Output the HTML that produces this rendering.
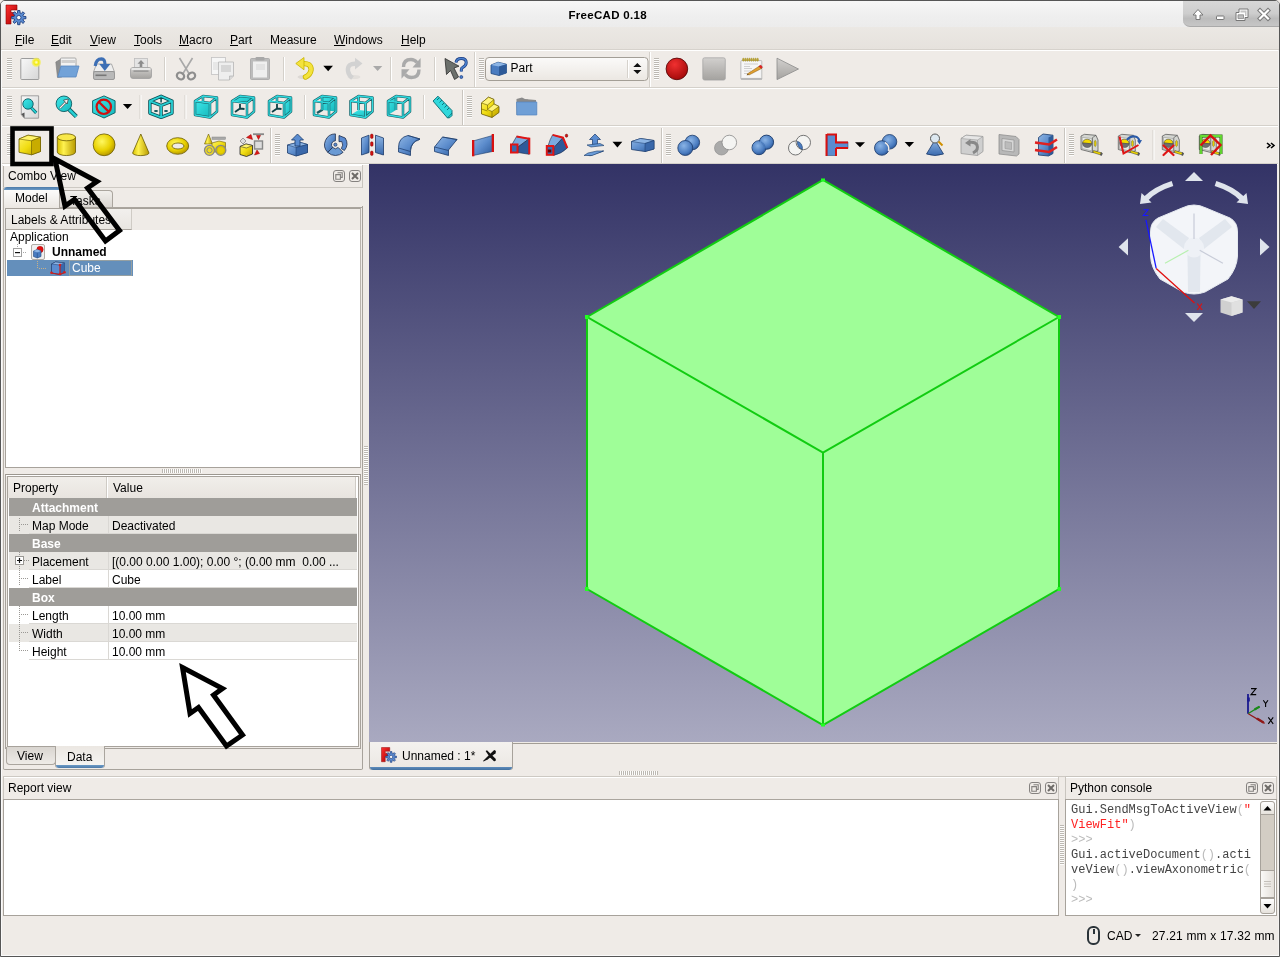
<!DOCTYPE html>
<html><head><meta charset="utf-8">
<style>
*{margin:0;padding:0;box-sizing:border-box}
html,body{width:1280px;height:957px;overflow:hidden}
.t,.row,.a{-webkit-font-smoothing:antialiased}
body{will-change:transform}
body{position:relative;background:#efebe7;font-family:"Liberation Sans",sans-serif;font-size:12px;color:#000}
.a{position:absolute}
.t{position:absolute;white-space:nowrap;line-height:12px}
.u{text-decoration:underline;text-underline-offset:1px;text-decoration-thickness:1px}
.gv{position:absolute;width:5px;background:repeating-linear-gradient(to bottom,#bcb8b2 0,#bcb8b2 1px,#fdfdfc 1px,#fdfdfc 2px)}
.gh{position:absolute;height:5px;background:repeating-linear-gradient(to right,#bcb8b2 0,#bcb8b2 1px,#fdfdfc 1px,#fdfdfc 2px)}
.vs{position:absolute;width:2px;height:28px;border-left:1px solid #d4d0ca;border-right:1px solid #fff}
.hl{position:absolute;height:2px;border-top:1px solid #d4d0ca;border-bottom:1px solid #fff}
.btn{position:absolute;width:12px;height:12px;border:1px solid #8a8783;border-radius:3px}
.row{position:absolute;left:9px;width:348px;height:18px}
.row .k{position:absolute;left:23px;top:4px;line-height:12px}
.row .v{position:absolute;left:103px;top:4px;line-height:12px}
.grp{background:#9f9d99;color:#fff;font-weight:bold}
.alt{background:#e9e7e3}
.wht{background:#fff}
.ln{border-bottom:1px solid #dad8d4}
.cs{position:absolute;left:0;top:0}
</style></head><body>
<svg width="0" height="0" style="position:absolute">
<defs>
 <linearGradient id="gFr" x1="0" y1="0" x2="1" y2="1"><stop offset="0" stop-color="#ff3030"/><stop offset="1" stop-color="#a80000"/></linearGradient>
 <symbol id="sFloat" viewBox="0 0 12 12"><rect x="0.5" y="0.5" width="11" height="11" rx="2.5" fill="none" stroke="#858280" stroke-width="1"/><path d="M4.5 2.8 H9.2 V7.4 H7.5 M2.8 4.6 H7.4 V9.2 H2.8 Z" fill="none" stroke="#858280" stroke-width="1.1"/></symbol>
 <symbol id="sClose" viewBox="0 0 12 12"><rect x="0.5" y="0.5" width="11" height="11" rx="2.5" fill="none" stroke="#858280" stroke-width="1"/><path d="M3 3 L9 9 M9 3 L3 9" stroke="#6e6b68" stroke-width="2"/></symbol>
 <symbol id="sFC" viewBox="0 0 24 24">
  <path d="M2 2 H13 V7 H7 V9.5 H11 V14 H7 V21 H2 Z" fill="url(#gFr)" stroke="#8a0000" stroke-width="0.6"/>
  <path d="M7 7 H13 V7.5" fill="none"/>
  <path d="M13.56 9.96 L13.67 7.49 L15.93 7.49 L16.04 9.96 L17.20 10.44 L19.03 8.78 L20.62 10.37 L18.96 12.20 L19.44 13.36 L21.91 13.47 L21.91 15.73 L19.44 15.84 L18.96 17.00 L20.62 18.83 L19.03 20.42 L17.20 18.76 L16.04 19.24 L15.93 21.71 L13.67 21.71 L13.56 19.24 L12.40 18.76 L10.57 20.42 L8.98 18.83 L10.64 17.00 L10.16 15.84 L7.69 15.73 L7.69 13.47 L10.16 13.36 L10.64 12.20 L8.98 10.37 L10.57 8.78 L12.40 10.44 Z" fill="#5a8ad0" stroke="#1a3a7a" stroke-width="0.9" stroke-linejoin="round"/><circle cx="14.8" cy="14.6" r="2.2" fill="#f4f4f4" stroke="#1a3a7a" stroke-width="0.8"/>
 </symbol>
</defs></svg>
<!-- window border -->
<div class="a" style="left:0;top:0;width:1280px;height:957px;border:1px solid #565656;border-radius:5px 5px 0 0"></div>
<div class="a" style="left:1px;top:27px;width:1px;height:929px;background:#fafafa"></div>
<div class="a" style="left:1278px;top:27px;width:1px;height:929px;background:#f4f2f0"></div>
<div class="a" style="left:1px;top:955px;width:1278px;height:1px;background:#fafafa"></div>
<!-- title bar -->
<div class="a" style="left:1px;top:1px;width:1278px;height:26px;background:linear-gradient(#f7f7f7,#efefef 55%,#ececec);border-radius:4px 4px 0 0"></div>
<div class="t" style="left:568.5px;top:9px;font-weight:bold;font-size:11.5px;letter-spacing:0.3px">FreeCAD 0.18</div>
<svg class="a" style="left:4px;top:3px" width="24" height="24"><use href="#sFC"/></svg>
<!-- window controls -->
<div class="a" style="left:1183px;top:1px;width:96px;height:26px;background:linear-gradient(#d7d7d7,#cdcdcd 50%,#bcbcbc 70%,#c6c6c6);border-radius:0 4px 0 7px;border-bottom:1px solid #a9a9a9"></div>
<svg class="a" style="left:1183px;top:0px" width="96" height="27">
 <g fill="#fff" stroke="#777" stroke-width="1" stroke-linejoin="round">
  <path d="M15 9.5 L20 15 L17 15 L17 19.5 L13 19.5 L13 15 L10 15 Z"/>
  <rect x="33.5" y="16" width="7.5" height="3.5" rx="0.5"/>
  <path d="M56 9 H65 V17.5 H62 V20.5 H53 V12.5 H56 Z"/>
  <path d="M57.5 10.5 H63.5 V16 H62 V12.5 H57.5 Z" fill="#c4c4c4" stroke="none"/>
  <rect x="55" y="14.8" width="5.5" height="3.8" fill="#bcbcbc" stroke="#888" stroke-width="0.8"/>
 </g>
 <path d="M77 10.5 L85 18.5 M85 10.5 L77 18.5" stroke="#7a7a7a" stroke-width="4.2" stroke-linecap="square"/>
 <path d="M77 10.5 L85 18.5 M85 10.5 L77 18.5" stroke="#fff" stroke-width="2.2" stroke-linecap="square"/>
</svg>
<!-- menu bar -->
<div class="a" style="left:1px;top:27px;width:1278px;height:23px;background:linear-gradient(#ebe8e4,#e6e2dd);border-bottom:1px solid #d6d2cc"></div>
<div class="a" style="left:2px;top:50px;width:1276px;height:1px;background:#fff"></div>
<div class="t" style="left:15px;top:34px"><span class="u">F</span>ile</div>
<div class="t" style="left:51px;top:34px"><span class="u">E</span>dit</div>
<div class="t" style="left:90px;top:34px"><span class="u">V</span>iew</div>
<div class="t" style="left:134px;top:34px"><span class="u">T</span>ools</div>
<div class="t" style="left:179px;top:34px"><span class="u">M</span>acro</div>
<div class="t" style="left:230px;top:34px"><span class="u">P</span>art</div>
<div class="t" style="left:270px;top:34px">Measure</div>
<div class="t" style="left:334px;top:34px"><span class="u">W</span>indows</div>
<div class="t" style="left:401px;top:34px"><span class="u">H</span>elp</div>

<!-- toolbar rows separators -->
<div class="hl" style="left:2px;top:87px;width:1276px"></div>
<div class="hl" style="left:2px;top:125px;width:1276px"></div>
<div class="hl" style="left:2px;top:163px;width:1276px"></div>
<!-- grips -->
<div class="gv" style="left:7px;top:58px;height:22px"></div>
<div class="gv" style="left:479px;top:58px;height:22px"></div>
<div class="gv" style="left:654px;top:58px;height:22px"></div>
<div class="gv" style="left:7px;top:96px;height:22px"></div>
<div class="gv" style="left:467px;top:96px;height:22px"></div>
<div class="gv" style="left:7px;top:134px;height:22px"></div>
<div class="gv" style="left:275px;top:134px;height:22px"></div>
<div class="gv" style="left:666px;top:134px;height:22px"></div>
<div class="gv" style="left:1069px;top:134px;height:22px"></div>

<svg class="a" style="left:0;top:0" width="1280" height="166">
<defs>
 <linearGradient id="gY" x1="0" y1="0" x2="1" y2="1"><stop offset="0" stop-color="#fff36a"/><stop offset="0.5" stop-color="#f0dc10"/><stop offset="1" stop-color="#b89a00"/></linearGradient>
 <linearGradient id="gYh" x1="0" y1="0" x2="1" y2="0"><stop offset="0" stop-color="#d8c000"/><stop offset="0.35" stop-color="#fff250"/><stop offset="1" stop-color="#b89a00"/></linearGradient>
 <radialGradient id="gYr" cx="0.4" cy="0.35" r="0.7"><stop offset="0" stop-color="#fff860"/><stop offset="0.6" stop-color="#e8d000"/><stop offset="1" stop-color="#b09000"/></radialGradient>
 <linearGradient id="gB" x1="0" y1="0" x2="1" y2="1"><stop offset="0" stop-color="#8fb6e4"/><stop offset="0.5" stop-color="#5c8ccc"/><stop offset="1" stop-color="#2c5a9a"/></linearGradient>
 <linearGradient id="gBv" x1="0" y1="0" x2="0" y2="1"><stop offset="0" stop-color="#8fb6e4"/><stop offset="1" stop-color="#3a6aae"/></linearGradient>
 <radialGradient id="gBr" cx="0.4" cy="0.35" r="0.7"><stop offset="0" stop-color="#8ab4e6"/><stop offset="0.7" stop-color="#4a7cc0"/><stop offset="1" stop-color="#2a5494"/></radialGradient>
 <linearGradient id="gT" x1="0" y1="0" x2="1" y2="1"><stop offset="0" stop-color="#3ee8ea"/><stop offset="1" stop-color="#16b8bc"/></linearGradient>
 <linearGradient id="gG" x1="0" y1="0" x2="0" y2="1"><stop offset="0" stop-color="#d2d0ce"/><stop offset="1" stop-color="#a4a29f"/></linearGradient>
 <linearGradient id="gW" x1="0" y1="0" x2="1" y2="1"><stop offset="0" stop-color="#f8f8f8"/><stop offset="1" stop-color="#d6d6d6"/></linearGradient>
 <radialGradient id="gR" cx="0.4" cy="0.3" r="0.75"><stop offset="0" stop-color="#f03030"/><stop offset="1" stop-color="#a00808"/></radialGradient>
 <radialGradient id="gSun" cx="0.5" cy="0.5" r="0.5"><stop offset="0" stop-color="#ffffd0"/><stop offset="0.45" stop-color="#f4ec10"/><stop offset="0.8" stop-color="#f4ee60" stop-opacity="0.7"/><stop offset="1" stop-color="#f4ee60" stop-opacity="0"/></radialGradient>
 <linearGradient id="gCombo" x1="0" y1="0" x2="0" y2="1"><stop offset="0" stop-color="#fbfaf9"/><stop offset="1" stop-color="#ebe7e2"/></linearGradient>
</defs>

<!-- ===== ROW 1 ===== -->
<!-- new -->
<rect x="20.8" y="58.5" width="18" height="21" rx="0.8" fill="url(#gW)" stroke="#9c9c9c" stroke-width="1"/>
<circle cx="36.3" cy="62.3" r="5.2" fill="url(#gSun)"/>
<!-- open -->
<path d="M55.8 62 L61 59 L62 77 L57.5 77.5 Z" fill="#8e8e8e" stroke="#777" stroke-width="0.6"/>
<rect x="60.5" y="58" width="15.5" height="11" rx="1" fill="#f2f2f2" stroke="#9a9a9a" stroke-width="0.8"/>
<rect x="61.5" y="60" width="13.5" height="3" fill="#cfcfcf"/>
<path d="M61 66 L79 66 L76 77 L57.8 77 Z" fill="#72a2d8" stroke="#5585c0" stroke-width="0.8"/>
<!-- save -->
<path d="M96.5 64 L111.5 64 L114.5 72 L93.5 72 Z" fill="#eeeeee" stroke="#9a9a9a" stroke-width="0.8"/>
<rect x="93.5" y="71.5" width="21" height="8" rx="1.5" fill="#b9b9b9" stroke="#8a8a8a" stroke-width="0.8"/>
<rect x="95.5" y="74.5" width="11" height="1.6" fill="#777"/>
<path d="M95.2 66 Q96 58.8 101.5 58.8 Q105 59 105 64.5" fill="none" stroke="#3d6fb5" stroke-width="3.2"/>
<path d="M99.3 64 L110.3 64 L104.8 71 Z" fill="#3d6fb5"/>
<!-- print (disabled) -->
<rect x="134.5" y="58.5" width="13" height="11" fill="#e4e4e4" stroke="#bdbdbd" stroke-width="0.8"/>
<path d="M141 60 L137.5 63.8 L139.7 63.8 L139.7 67 L142.3 67 L142.3 63.8 L144.5 63.8 Z" fill="#8c8c8c"/>
<rect x="130.5" y="67.5" width="21" height="11" rx="2.5" fill="url(#gG)" stroke="#9e9e9e" stroke-width="0.8"/>
<rect x="133.5" y="70.5" width="15" height="1.2" fill="#8a8a8a"/>
<rect x="131.5" y="68" width="19" height="2" fill="#f4f4f4" opacity="0.7"/>
<!-- sep -->
<rect x="164" y="57" width="1" height="24" fill="#d4d0ca"/><rect x="165" y="57" width="1" height="24" fill="#fff"/>
<!-- cut (disabled) -->
<g fill="none" stroke="#a8a8a8" stroke-width="1.6">
<path d="M179.5 58 L189 73.5 M192.5 58 L183 73.5"/>
</g>
<g fill="none" stroke="#8e8e8e" stroke-width="2.2">
<ellipse cx="180.5" cy="76" rx="3.8" ry="3.2" transform="rotate(30 180.5 76)"/>
<ellipse cx="191.5" cy="76" rx="3.8" ry="3.2" transform="rotate(-30 191.5 76)"/>
</g>
<!-- copy (disabled) -->
<rect x="211.5" y="57.5" width="14" height="17" fill="#f6f6f6" stroke="#c2c2c2" stroke-width="0.8"/>
<g stroke="#d2d2d2" stroke-width="0.8"><path d="M213 63h6 M213 65h6 M213 67h6 M213 69h6"/></g>
<path d="M218.5 62 L233.5 62 L233.5 76 L229.5 80 L218.5 80 Z" fill="#eeeeee" stroke="#b5b5b5" stroke-width="0.8"/>
<rect x="221" y="65" width="10" height="7" fill="#d6d6d6"/>
<path d="M229.5 80 L229.5 76 L233.5 76" fill="#d8d8d8" stroke="#aaa" stroke-width="0.6"/>
<!-- paste (disabled) -->
<rect x="250.5" y="58.5" width="19" height="21" rx="1" fill="#bcbcbc" stroke="#a5a5a5" stroke-width="0.8"/>
<rect x="253" y="61.5" width="14" height="16" fill="#efefef"/>
<rect x="255.5" y="57" width="9" height="3.5" rx="1" fill="#a8a8a8"/>
<rect x="256" y="64" width="9" height="6" fill="#e2e2e2"/>
<!-- sep -->
<rect x="283" y="57" width="1" height="24" fill="#d4d0ca"/><rect x="284" y="57" width="1" height="24" fill="#fff"/>
<!-- undo -->
<ellipse cx="304" cy="77" rx="6.5" ry="2" fill="#000" opacity="0.08"/>
<path d="M301.5 63.8 Q311.5 62.5 311 70 Q310.5 74.5 305.5 77" fill="none" stroke="#c8b400" stroke-width="5.4" stroke-linecap="round"/>
<path d="M301.5 63.8 Q311.5 62.5 311 70 Q310.5 74.5 305.5 77" fill="none" stroke="#f4e33c" stroke-width="3.8" stroke-linecap="round"/>
<path d="M295.8 63.5 L304 57.5 L304 69.8 Z" fill="#f4e33c" stroke="#c8b400" stroke-width="0.8" stroke-linejoin="round"/>
<path d="M323.3 65.7 L333 65.7 L328.15 71.3 Z" fill="#000"/>
<!-- redo (disabled) -->
<ellipse cx="354" cy="77" rx="6.5" ry="2" fill="#000" opacity="0.05"/>
<path d="M357.5 64 Q347 62.5 348 71 Q348.5 75 352.5 78" fill="none" stroke="#d2d2d2" stroke-width="4.4"/>
<path d="M362.5 63.5 L355 57.8 L355 69.5 Z" fill="#d2d2d2"/>
<path d="M373 66 L382.3 66 L377.65 71 Z" fill="#a9a9a9"/>
<!-- sep -->
<rect x="390" y="57" width="1" height="24" fill="#d4d0ca"/><rect x="391" y="57" width="1" height="24" fill="#fff"/>
<!-- refresh (disabled) -->
<g fill="none" stroke="#aaaaaa" stroke-width="3.4">
<path d="M403.5 67 Q403.5 59.5 411 59.5 Q414.5 59.5 417 62.5"/>
<path d="M419 69.5 Q419 77.5 411.5 77.5 Q408 77.5 405 74.5"/>
</g>
<path d="M420.6 58 L420.6 67.5 L412.5 67.5 Z" fill="#aaaaaa"/>
<path d="M401.5 78.8 L401.5 69.2 L409.5 69.2 Z" fill="#aaaaaa"/>
<!-- sep -->
<rect x="434" y="57" width="1" height="24" fill="#d4d0ca"/><rect x="435" y="57" width="1" height="24" fill="#fff"/>
<!-- what's this -->
<path d="M445 58.5 L459 66.2 L454 68 L458.5 77 L454.5 79.5 L450.5 70.5 L446.5 74.5 Z" fill="#6c706c" stroke="#2c2c2c" stroke-width="0.8" stroke-linejoin="round"/>
<path d="M456 62.5 Q456.5 58.5 461.3 58.5 Q466.2 58.5 466.2 62.6 Q466.2 65.8 462.8 67.3 Q461.3 68 461.3 70 V71.5" fill="none" stroke="#1a3a80" stroke-width="3"/>
<path d="M456 62.5 Q456.5 58.5 461.3 58.5 Q466.2 58.5 466.2 62.6 Q466.2 65.8 462.8 67.3 Q461.3 68 461.3 70 V71.5" fill="none" stroke="#4a80cc" stroke-width="1.6"/>
<circle cx="461.3" cy="77" r="1.5" fill="#4a80cc" stroke="#1a3a80" stroke-width="0.7"/>
<!-- toolbar end sep -->
<rect x="474" y="52" width="1" height="35" fill="#d4d0ca"/><rect x="475" y="52" width="1" height="35" fill="#fff"/>
<!-- workbench combo -->
<rect x="485.5" y="57.5" width="162.5" height="23" rx="3.5" fill="url(#gCombo)" stroke="#a39e96" stroke-width="1"/>
<rect x="627" y="60" width="1" height="18" fill="#d6d2cc"/><rect x="628" y="60" width="1" height="18" fill="#fff"/>
<path d="M633.3 67 L641.4 67 L637.35 63 Z M633.3 70 L641.4 70 L637.35 74 Z" fill="#111"/>
<path d="M491 65 L498 62.2 L506.4 64.2 L506.4 73 L499 75.5 L491 73.5 Z" fill="#4a7cc0" stroke="#1e467e" stroke-width="0.8"/>
<path d="M491 65 L498 62.2 L506.4 64.2 L499 66.6 Z" fill="#8cb4e4"/>
<path d="M499 66.6 L506.4 64.2 L506.4 73 L499 75.5 Z" fill="#2e5a98"/>
<text x="510.5" y="72.2" font-family="Liberation Sans" font-size="12" fill="#000">Part</text>
<rect x="649" y="52" width="1" height="35" fill="#d4d0ca"/><rect x="650" y="52" width="1" height="35" fill="#fff"/>
<!-- record -->
<circle cx="676.9" cy="68.9" r="10.8" fill="url(#gR)" stroke="#5a0a0a" stroke-width="0.9"/>
<!-- stop -->
<rect x="702.8" y="57.8" width="22.5" height="22.3" rx="1.8" fill="url(#gG)" stroke="#a0a0a0" stroke-width="0.7"/>
<!-- macro edit -->
<rect x="740.8" y="60.5" width="21" height="19" rx="1" fill="#f0f0f0" stroke="#b0b0b0" stroke-width="0.8"/>
<rect x="742" y="62" width="18.5" height="15" fill="#f6f6f6"/>
<ellipse cx="743.30" cy="59.7" rx="0.85" ry="1.6" fill="#c0a830" stroke="#8a7a20" stroke-width="0.3"/><ellipse cx="745.35" cy="59.7" rx="0.85" ry="1.6" fill="#c0a830" stroke="#8a7a20" stroke-width="0.3"/><ellipse cx="747.40" cy="59.7" rx="0.85" ry="1.6" fill="#c0a830" stroke="#8a7a20" stroke-width="0.3"/><ellipse cx="749.45" cy="59.7" rx="0.85" ry="1.6" fill="#c0a830" stroke="#8a7a20" stroke-width="0.3"/><ellipse cx="751.50" cy="59.7" rx="0.85" ry="1.6" fill="#c0a830" stroke="#8a7a20" stroke-width="0.3"/><ellipse cx="753.55" cy="59.7" rx="0.85" ry="1.6" fill="#c0a830" stroke="#8a7a20" stroke-width="0.3"/><ellipse cx="755.60" cy="59.7" rx="0.85" ry="1.6" fill="#c0a830" stroke="#8a7a20" stroke-width="0.3"/><ellipse cx="757.65" cy="59.7" rx="0.85" ry="1.6" fill="#c0a830" stroke="#8a7a20" stroke-width="0.3"/>
<g stroke="#cfcfcf" stroke-width="1.2"><path d="M744 64 H758 M744 66.5 H750 M744 68.5 H752 M744 71 H751 M744 73.5 H750"/></g>
<path d="M747.5 73.8 L759.5 66 L761.5 68.5 L749 75 Z" fill="#e0a030" stroke="#8a5a10" stroke-width="0.5"/>
<path d="M758.8 66.2 L760.8 65 L762.6 67.3 L761.2 68.6 Z" fill="#e82020" stroke="#7a1010" stroke-width="0.3"/>
<path d="M747.5 73.8 L749 75 L746.6 75.3 Z" fill="#6a4a10"/>
<rect x="741" y="78" width="21" height="1.8" fill="#b8b8b8"/>
<!-- play -->
<path d="M777 58.2 L798.5 69 L777 79.6 Z" fill="url(#gG)" stroke="#8a8a8a" stroke-width="0.8" stroke-linejoin="round"/>

<!-- ===== ROW 2 ===== -->
<!-- fit all -->
<path d="M21.3 95.8 L38.6 95.8 L38.6 118.2 L24.5 118.2 L21.3 115 Z" fill="url(#gW)" stroke="#8c8c8c" stroke-width="0.8"/>
<path d="M21.3 114 L24.5 112.5 L24.5 118.2 Z" fill="#555"/>
<line x1="31.5" y1="108" x2="36.2" y2="112.8" stroke="#0a5a60" stroke-width="3.2"/>
<line x1="31.5" y1="108" x2="36.2" y2="112.8" stroke="#26d0d4" stroke-width="1.8"/>
<circle cx="28" cy="104" r="5.2" fill="url(#gT)" stroke="#0a5a60" stroke-width="0.9"/>
<!-- fit selection -->
<line x1="69" y1="109.3" x2="76.3" y2="116.6" stroke="#0a5a60" stroke-width="4.2"/>
<line x1="69" y1="109.3" x2="76.3" y2="116.6" stroke="#26d0d4" stroke-width="2.6"/>
<circle cx="63.9" cy="103.8" r="7.8" fill="url(#gT)" stroke="#0a5a60" stroke-width="0.9"/>
<path d="M60 108 L66 102" fill="none" stroke="#444" stroke-width="2.4"/>
<path d="M60 108 L66 102" fill="none" stroke="#f4f4f4" stroke-width="1.2"/>
<path d="M63.5 100.2 L68.3 99 L67.2 104 Z" fill="#f4f4f4" stroke="#333" stroke-width="0.7"/>
<!-- draw style -->
<path d="M104 95.9 L115.1 100.8 L115.1 112.7 L104 118 L92.6 112.7 L92.6 100.8 Z" fill="url(#gT)" stroke="#0a5a60" stroke-width="0.9"/>
<circle cx="103.8" cy="106.8" r="7.2" fill="none" stroke="#d01010" stroke-width="2.2"/>
<line x1="98.7" y1="101.7" x2="108.9" y2="111.9" stroke="#d01010" stroke-width="2.2"/>
<path d="M122.9 104 L132.2 104 L127.55 108.9 Z" fill="#000"/>
<!-- sep -->
<rect x="139.5" y="95" width="1" height="24" fill="#d4d0ca"/><rect x="140.5" y="95" width="1" height="24" fill="#fff"/>
<!-- axo -->
<g fill="none" stroke-linejoin="round">
<g stroke="#0d5055" stroke-width="3.4"><path d="M161.1 96.2 L172 101.1 L172 113.1 L161.1 117.3 L149.9 113.1 L149.9 101.1 Z M149.9 101.1 L161.1 105.5 L172 101.1 M161.1 105.5 L161.1 117.3"/></g>
<g stroke="#28d0d4" stroke-width="1.8"><path d="M161.1 96.2 L172 101.1 L172 113.1 L161.1 117.3 L149.9 113.1 L149.9 101.1 Z M149.9 101.1 L161.1 105.5 L172 101.1 M161.1 105.5 L161.1 117.3"/></g>
</g>
<path d="M161.1 98 V102.5" stroke="#0d5055" stroke-width="1.5"/>
<ellipse cx="156" cy="111" rx="2" ry="1" fill="#0d5055"/><ellipse cx="166" cy="111" rx="2" ry="1" fill="#0d5055"/>
<!-- sep -->
<rect x="184.5" y="95" width="1" height="24" fill="#d4d0ca"/><rect x="185.5" y="95" width="1" height="24" fill="#fff"/>
<!-- views: front, top, right -->
<g id="vF" transform="translate(194.5,95)">
 <path d="M0.5 6 L15.5 8 L15.5 22.5 L0.5 20 Z" fill="url(#gT)"/>
 <g fill="none" stroke-linejoin="round"><g stroke="#1a5a60" stroke-width="2.5"><path d="M0.5 6 L15.5 8 L15.5 22.5 L0.5 20 Z M0.5 6 L8.5 1 L22.5 2.5 L15.5 8 M22.5 2.5 L22.5 16.5 L15.5 22.5 M8.5 1 V8"/></g>
 <g stroke="#30dade" stroke-width="1.3"><path d="M0.5 6 L15.5 8 L15.5 22.5 L0.5 20 Z M0.5 6 L8.5 1 L22.5 2.5 L15.5 8 M22.5 2.5 L22.5 16.5 L15.5 22.5 M8.5 1 V8"/></g></g>
</g>
<g transform="translate(231.5,95)">
 <path d="M0.5 6 L8.5 1 L22.5 2.5 L15.5 8 Z" fill="url(#gT)"/>
 <g fill="none" stroke-linejoin="round"><g stroke="#1a5a60" stroke-width="2.5"><path d="M0.5 6 L15.5 8 L15.5 22.5 L0.5 20 Z M0.5 6 L8.5 1 L22.5 2.5 L15.5 8 M22.5 2.5 L22.5 16.5 L15.5 22.5"/></g>
 <g stroke="#30dade" stroke-width="1.3"><path d="M0.5 6 L15.5 8 L15.5 22.5 L0.5 20 Z M0.5 6 L8.5 1 L22.5 2.5 L15.5 8 M22.5 2.5 L22.5 16.5 L15.5 22.5"/></g></g>
 <path d="M8.5 9 V13.5 L3.5 17 M8.5 13.5 L13 14" fill="none" stroke="#0d4045" stroke-width="1.8"/>
</g>
<g transform="translate(268.5,95)">
 <path d="M15.5 8 L22.5 2.5 L22.5 16.5 L15.5 22.5 Z" fill="url(#gT)"/>
 <g fill="none" stroke-linejoin="round"><g stroke="#1a5a60" stroke-width="2.5"><path d="M0.5 6 L15.5 8 L15.5 22.5 L0.5 20 Z M0.5 6 L8.5 1 L22.5 2.5 L15.5 8 M22.5 2.5 L22.5 16.5 L15.5 22.5 M8.5 1 V8"/></g>
 <g stroke="#30dade" stroke-width="1.3"><path d="M0.5 6 L15.5 8 L15.5 22.5 L0.5 20 Z M0.5 6 L8.5 1 L22.5 2.5 L15.5 8 M22.5 2.5 L22.5 16.5 L15.5 22.5 M8.5 1 V8"/></g></g>
 <path d="M8.5 9 V13.5 L3.5 17 M8.5 13.5 L13 14" fill="none" stroke="#0d4045" stroke-width="1.8"/>
</g>
<rect x="304" y="95" width="1" height="24" fill="#d4d0ca"/><rect x="305" y="95" width="1" height="24" fill="#fff"/>
<!-- rear, bottom, left -->
<g transform="translate(313.5,95)">
 <path d="M8.5 1 L22.5 2.5 L22.5 16.5 L8.5 15 Z" fill="url(#gT)"/>
 <g fill="none" stroke-linejoin="round"><g stroke="#1a5a60" stroke-width="2.5"><path d="M0.5 6 L15.5 8 L15.5 22.5 L0.5 20 Z M0.5 6 L8.5 1 L22.5 2.5 L15.5 8 M22.5 2.5 L22.5 16.5 L15.5 22.5 M8.5 1 V15 L3.5 18"/></g>
 <g stroke="#30dade" stroke-width="1.3"><path d="M0.5 6 L15.5 8 L15.5 22.5 L0.5 20 Z M0.5 6 L8.5 1 L22.5 2.5 L15.5 8 M22.5 2.5 L22.5 16.5 L15.5 22.5 M8.5 1 V15"/></g></g>
</g>
<g transform="translate(350,95)">
 <path d="M0.5 20 L15.5 22.5 L22.5 16.5 L8.5 15 Z" fill="url(#gT)"/>
 <g fill="none" stroke-linejoin="round"><g stroke="#1a5a60" stroke-width="2.5"><path d="M0.5 6 L15.5 8 L15.5 22.5 L0.5 20 Z M0.5 6 L8.5 1 L22.5 2.5 L15.5 8 M22.5 2.5 L22.5 16.5 L15.5 22.5 M8.5 1 V15"/></g>
 <g stroke="#30dade" stroke-width="1.3"><path d="M0.5 6 L15.5 8 L15.5 22.5 L0.5 20 Z M0.5 6 L8.5 1 L22.5 2.5 L15.5 8 M22.5 2.5 L22.5 16.5 L15.5 22.5 M8.5 1 V15"/></g></g>
</g>
<g transform="translate(387.5,95)">
 <path d="M0.5 6 L8.5 1 L8.5 15 L0.5 20 Z" fill="url(#gT)"/>
 <g fill="none" stroke-linejoin="round"><g stroke="#1a5a60" stroke-width="2.5"><path d="M0.5 6 L15.5 8 L15.5 22.5 L0.5 20 Z M0.5 6 L8.5 1 L22.5 2.5 L15.5 8 M22.5 2.5 L22.5 16.5 L15.5 22.5 M8.5 1 V15"/></g>
 <g stroke="#30dade" stroke-width="1.3"><path d="M0.5 6 L15.5 8 L15.5 22.5 L0.5 20 Z M0.5 6 L8.5 1 L22.5 2.5 L15.5 8 M22.5 2.5 L22.5 16.5 L15.5 22.5 M8.5 1 V15"/></g></g>
</g>
<rect x="423" y="95" width="1" height="24" fill="#d4d0ca"/><rect x="424" y="95" width="1" height="24" fill="#fff"/>
<!-- ruler -->
<path d="M433 101 L438 96.2 L452 110.5 L452 115.5 Q450 118.5 447.5 118 Z" fill="#30d8dc" stroke="#0a6a70" stroke-width="0.9" stroke-linejoin="round"/>
<g stroke="#0a6a70" stroke-width="0.9"><path d="M437 100 L439 98 M439.5 102.5 L442 100 M442 105 L444 103 M444.5 107.5 L447 105 M447 110 L449 108"/></g>
<path d="M447.5 118 L452 113" stroke="#0a6a70" stroke-width="0.8"/>
<rect x="462" y="90" width="1" height="35" fill="#c9c5bf"/><rect x="463" y="90" width="1" height="35" fill="#fff"/>
<!-- part design (yellow) -->
<path d="M481.5 103 L488.5 97.2 L494 99.5 L494 104 L499 106.5 L499 112.5 L492 117.5 L481.5 114 Z" fill="url(#gY)" stroke="#6a5a00" stroke-width="0.8" stroke-linejoin="round"/>
<path d="M481.5 103 L488.5 97.2 L494 99.5 L487.5 105 Z M487.5 109.5 L494 104 L499 106.5 L492 111.5 Z" fill="#fff47a" stroke="#6a5a00" stroke-width="0.6"/>
<path d="M487.5 105 L487.5 109.5 M481.5 109 L487.5 111 M492 111.5 V117.5" stroke="#6a5a00" stroke-width="0.6" fill="none"/>
<!-- folder -->
<path d="M516.5 99 L522 97.5 L525 99 L536 100 L536.5 114.8 L516.5 114.8 Z" fill="#8a8a8a"/>
<path d="M516.5 102 L536.8 102 L536.8 115 L516.8 115 Z" fill="#6f9fd6" stroke="#5585c0" stroke-width="0.7"/>

<!-- ===== ROW 3 ===== -->
<!-- box -->
<path d="M19 139 L28 135.2 L40.5 137.2 L40.5 151.5 L31.5 154.8 L19 152.3 Z" fill="url(#gY)" stroke="#6a5a00" stroke-width="0.8" stroke-linejoin="round"/>
<path d="M19 139 L28 135.2 L40.5 137.2 L31.5 140.8 Z" fill="#fff46a" stroke="#6a5a00" stroke-width="0.6"/>
<path d="M31.5 140.8 L40.5 137.2 L40.5 151.5 L31.5 154.8 Z" fill="#c8ac00" stroke="#6a5a00" stroke-width="0.6"/>
<!-- cylinder -->
<path d="M57.3 137.3 V152 A9 3.5 0 0 0 75.5 152 V137.3 Z" fill="url(#gYh)" stroke="#6a5a00" stroke-width="0.8"/>
<ellipse cx="66.4" cy="137.3" rx="9.1" ry="3.5" fill="#f8e84a" stroke="#6a5a00" stroke-width="0.8"/>
<!-- sphere -->
<circle cx="104.1" cy="144.8" r="10.9" fill="url(#gYr)" stroke="#6a5a00" stroke-width="0.8"/>
<!-- cone -->
<path d="M140.8 134 L149 153 A8.2 2.6 0 0 1 132.6 153 Z" fill="url(#gYh)" stroke="#6a5a00" stroke-width="0.8" stroke-linejoin="round"/>
<!-- torus -->
<ellipse cx="177.7" cy="146" rx="11" ry="8.3" fill="url(#gYr)" stroke="#6a5a00" stroke-width="0.8"/>
<ellipse cx="178" cy="146" rx="6" ry="3" fill="#efebe7" stroke="#6a5a00" stroke-width="0.8"/>
<!-- primitives -->
<path d="M208.5 134 L212.5 144 L204.5 144 Z" fill="url(#gYh)" stroke="#6a5a00" stroke-width="0.6"/>
<rect x="212" y="137" width="13.5" height="2.4" fill="#a8a8a8" stroke="#888" stroke-width="0.5"/>
<path d="M212 143 L219 141 L225.5 142.5 L225.5 152 L212 152 Z" fill="url(#gY)" stroke="#6a5a00" stroke-width="0.6"/>
<circle cx="209.5" cy="150.3" r="5" fill="#f0dc20" stroke="#888" stroke-width="1.3"/>
<circle cx="209.5" cy="150.3" r="2.6" fill="none" stroke="#888" stroke-width="1"/>
<circle cx="220.8" cy="150.3" r="5" fill="#d8c000" stroke="#888" stroke-width="1.3"/>
<circle cx="220.8" cy="150.3" r="3" fill="#e8d000"/>
<!-- shape builder -->
<path d="M240 141 L243 138 L246 141 L243 144 Z" fill="#ddd" stroke="#888" stroke-width="0.8"/>
<path d="M246.5 137.5 L251 134.5 L252.5 139.5 Z" fill="#e01818" stroke="#900" stroke-width="0.5"/>
<rect x="253" y="133.3" width="11" height="1.8" fill="#888"/>
<path d="M256.5 135.5 L260.5 135.5 L258.5 139.5 Z" fill="#e01818" stroke="#900" stroke-width="0.5"/>
<rect x="254.5" y="141" width="8" height="8" fill="#ddd" stroke="#888" stroke-width="1.4"/>
<path d="M240 146.5 L246 144 L252.5 145.5 L252.5 154 L246.5 156.5 L240 154.5 Z" fill="url(#gY)" stroke="#222" stroke-width="0.8" stroke-linejoin="round"/>
<path d="M240 146.5 L246 144 L252.5 145.5 L246.5 148 Z" fill="#fff46a" stroke="#222" stroke-width="0.5"/>
<path d="M257 150 L254.5 155 L259.5 153.5 Z" fill="#e01818" stroke="#900" stroke-width="0.5"/>
<!-- sep + grip -->
<rect x="270" y="128" width="1" height="35" fill="#c9c5bf"/><rect x="271" y="128" width="1" height="35" fill="#fff"/>
<!-- extrude -->
<path d="M287.5 145 L299 142 L307.5 144.5 L307.5 152.5 L296 156 L287.5 153 Z" fill="url(#gB)" stroke="#1a3a6a" stroke-width="0.8" stroke-linejoin="round"/>
<path d="M287.5 145 L299 142 L307.5 144.5 L296 147.5 Z" fill="#8cb4e4" stroke="#1a3a6a" stroke-width="0.5"/>
<path d="M296 147.5 L307.5 144.5 L307.5 152.5 L296 156 Z" fill="#3a68aa" stroke="#1a3a6a" stroke-width="0.5"/>
<path d="M297.5 134 L303.5 140 L300 140 L300 146 L295 146 L295 140 L291.5 140 Z" fill="#5a8cd0" stroke="#1a3a6a" stroke-width="0.8" stroke-linejoin="round"/>
<!-- revolve -->
<g fill="url(#gB)" stroke="#1a2a4a" stroke-width="0.8" stroke-linejoin="round">
<path d="M335.4 133.9 A10.8 10.8 0 0 0 327.76 152.34 L332.64 147.46 A3.9 3.9 0 0 1 335.4 140.8 Z"/>
<path d="M327.76 152.34 A10.8 10.8 0 0 0 343.04 152.34 L338.16 147.46 A3.9 3.9 0 0 1 332.64 147.46 Z" fill="#6a9ad4"/>
<path d="M344.4 150.5 A10.8 10.8 0 0 0 345.2 138 L339 135.5 L339 141.7 L341.8 141.5 A6.5 6.5 0 0 1 341.3 148.6 Z" fill="#5a8ad0"/>
</g>
<circle cx="335.4" cy="144.7" r="1.6" fill="#5a8ad0" stroke="#1a2a4a" stroke-width="0.6"/>
<!-- mirror -->
<path d="M361.5 138 L369 135.2 L369 152.5 L361.5 155 Z" fill="url(#gB)" stroke="#1a3a6a" stroke-width="0.8" stroke-linejoin="round"/>
<path d="M375.5 135.2 L383.5 138 L383.5 155 L375.5 152.5 Z" fill="url(#gBv)" stroke="#1a3a6a" stroke-width="0.8" stroke-linejoin="round"/>
<g fill="#d01010" stroke="#700" stroke-width="0.4"><rect x="370.5" y="134" width="2.6" height="4.5" rx="1.2"/><rect x="370.5" y="141.8" width="2.6" height="4.5" rx="1.2"/><rect x="370.5" y="151" width="2.6" height="4.5" rx="1.2"/></g>
<!-- fillet -->
<path d="M398.5 147.5 Q398.5 137.5 408 135.5 L420 139 Q411 141.5 410.5 151 L410.5 155.5 L398.5 152 Z" fill="url(#gB)" stroke="#1a3a6a" stroke-width="0.8" stroke-linejoin="round"/>
<path d="M408 135.5 L420 139 L419 140 Q411.5 142 410.5 149.5" fill="none" stroke="#1a3a6a" stroke-width="0.6"/>
<path d="M398.5 148 L410.5 151.5" stroke="#1a3a6a" stroke-width="0.7"/>
<!-- chamfer -->
<path d="M434.5 147 L442.5 137 L457 139.5 L448.5 150 L448.5 155.5 L434.5 151.5 Z" fill="url(#gB)" stroke="#1a3a6a" stroke-width="0.8" stroke-linejoin="round"/>
<path d="M434.5 147 L448.5 150.5" stroke="#1a3a6a" stroke-width="0.7"/>
<path d="M442.5 137 L457 139.5 L455.5 141" stroke="#1a3a6a" stroke-width="0.6" fill="none"/>
<!-- ruled surface -->
<path d="M473 141 L492.5 135.5 L492.5 151.5 L473 155.5 Z" fill="url(#gB)" stroke="#1a3a6a" stroke-width="0.6"/>
<rect x="472" y="140" width="2.3" height="16.3" fill="#d81010"/><rect x="491.7" y="134" width="2.3" height="18" fill="#d81010"/>
<!-- loft -->
<path d="M512 144.5 L516.5 136.6 L529.3 138.7 L518 147 Z" fill="#7aaae0" stroke="#1a2a4a" stroke-width="0.6"/>
<path d="M518 147 L529.3 138.7 L529.3 154.3 L518 152.5 Z" fill="#2e5a9a" stroke="#1a2a4a" stroke-width="0.6"/>
<path d="M516.5 136.6 L529.3 138.7 L529.3 154.3" fill="none" stroke="#e01515" stroke-width="2"/>
<rect x="511" y="144.5" width="6.5" height="8" fill="#3a6ab0" stroke="#e01515" stroke-width="2"/>
<!-- sweep -->
<path d="M548 146 Q550 139 552.6 134.9 L563 137.7 Q558 143 554 147.5 Z" fill="#7aaae0" stroke="#1a2a4a" stroke-width="0.6"/>
<path d="M554 147.5 Q558 143 563 137.7 L567.3 148 Q562 153.5 553.7 155.4 Z" fill="#2e5a9a" stroke="#1a2a4a" stroke-width="0.6"/>
<path d="M552.6 134.9 L563 137.7 L567.3 148" fill="none" stroke="#e01515" stroke-width="2"/>
<rect x="546.8" y="146" width="6.5" height="8.8" fill="#3a6ab0" stroke="#e01515" stroke-width="2"/>
<rect x="547.8" y="149.5" width="3.5" height="3" fill="#600"/>
<ellipse cx="566.5" cy="135.7" rx="1.3" ry="1.6" fill="#d01010" stroke="#500" stroke-width="0.4"/>
<!-- section/offset -->
<path d="M595 134 L600.5 139.5 L597.5 139.5 L597.5 145 L592.5 145 L592.5 139.5 L589.5 139.5 Z" fill="#5a8cd0" stroke="#1a3a6a" stroke-width="0.7"/>
<path d="M587 145 L600 143.5 L604 145.5 L591 147 Z" fill="#6a9cd8" stroke="#1a3a6a" stroke-width="0.6"/>
<path d="M586.5 154.5 L599.5 152 L603.5 151 L590 155.8 Z" fill="#6a9cd8" stroke="#1a3a6a" stroke-width="0.6"/>
<path d="M588 153 L597 151 L603.5 151 L592 155.5 L584 155.5 Z" fill="#6a9cd8" stroke="#1a3a6a" stroke-width="0.6"/>
<path d="M612.5 141.75 L622.3 141.75 L617.4 147.5 Z" fill="#000"/>
<!-- thickness -->
<path d="M631.5 141.5 L640.5 138.5 L654 140.5 L654 149 L645 151.5 L631.5 149.5 Z" fill="url(#gB)" stroke="#1a3a6a" stroke-width="0.8" stroke-linejoin="round"/>
<path d="M631.5 141.5 L640.5 138.5 L654 140.5 L645 143.5 Z" fill="#8cb4e4" stroke="#1a3a6a" stroke-width="0.5"/>
<path d="M645 143.5 L654 140.5 L654 149 L645 151.5 Z" fill="#3a68aa" stroke="#1a3a6a" stroke-width="0.5"/>
<rect x="661" y="128" width="1" height="35" fill="#c9c5bf"/><rect x="662" y="128" width="1" height="35" fill="#fff"/>
<!-- boolean -->
<circle cx="692.3" cy="142.5" r="7.3" fill="url(#gBr)" stroke="#1a3a6a" stroke-width="0.8"/>
<circle cx="685.3" cy="148" r="7.5" fill="url(#gBr)" stroke="#1a3a6a" stroke-width="0.8"/>
<!-- cut -->
<circle cx="721.5" cy="148" r="7" fill="#aaa" stroke="#888" stroke-width="0.6"/>
<circle cx="729.3" cy="142.5" r="7.3" fill="#f4f4f2" stroke="#888" stroke-width="0.8"/>
<!-- fuse -->
<circle cx="759" cy="147.7" r="7" fill="url(#gBr)" stroke="#1a3a6a" stroke-width="0.9"/>
<circle cx="766.5" cy="142.2" r="7.1" fill="url(#gBr)" stroke="#1a3a6a" stroke-width="0.9"/>
<circle cx="759" cy="147.7" r="6.5" fill="url(#gBr)"/>
<path d="M761 141.5 L765 148" stroke="#4a7ab8" stroke-width="0.8"/>
<!-- common -->
<circle cx="795.5" cy="148" r="7" fill="#f4f4f2" stroke="#666" stroke-width="0.9"/>
<circle cx="803.3" cy="142.5" r="7.2" fill="#f4f4f2" stroke="#666" stroke-width="0.9"/>
<path d="M797.5 141.3 A7 7 0 0 1 802.3 149.4 A7.2 7.2 0 0 1 797.5 141.3 Z" fill="#4a7cc0" stroke="#1a3a6a" stroke-width="0.6"/>
<!-- join T -->
<path d="M827 134.5 L835.5 134.5 L835.5 142 L848 142 L848 148.5 L835.5 148.5 L835.5 155.5 L827 155.5 Z" fill="#5a8cd0" stroke="#1a3a6a" stroke-width="0.5"/>
<path d="M826.5 134 V156 M827 134.5 H836 V142.5 H848 M836 148 H848 M836 148 V156" fill="none" stroke="#d81010" stroke-width="2"/>
<path d="M855 142.3 L865 142.3 L860 147.3 Z" fill="#000"/>
<!-- split -->
<circle cx="889.5" cy="141.8" r="7.3" fill="url(#gBr)" stroke="#1a3a6a" stroke-width="0.8"/>
<circle cx="881.8" cy="148" r="7.3" fill="url(#gBr)" stroke="#1a3a6a" stroke-width="0.8"/>
<path d="M885 142.5 A7.3 7.3 0 0 1 888.5 151" fill="none" stroke="#efebe7" stroke-width="1.6"/>
<path d="M904.6 142 L914.1 142 L909.35 146.9 Z" fill="#000"/>
<!-- check geometry -->
<path d="M935 140 L943.5 154 Q935 157 926.5 154 Z" fill="url(#gBv)" stroke="#1a3a6a" stroke-width="0.8" stroke-linejoin="round"/>
<circle cx="935" cy="138.5" r="4.5" fill="#dde8f0" stroke="#555" stroke-width="1"/>
<line x1="938.5" y1="141.5" x2="942.5" y2="145.5" stroke="#d09000" stroke-width="2"/>
<!-- defeaturing (disabled) -->
<path d="M961 138.5 L966 135.2 L983 136.5 L983 151.5 L977.5 155.5 L961 153.5 Z" fill="#cfcfcf" stroke="#9a9a9a" stroke-width="0.8"/>
<path d="M961 138.5 L966 135.2 L983 136.5 L977.5 140 Z" fill="#e6e6e6" stroke="#9a9a9a" stroke-width="0.6"/>
<path d="M977.5 140 V155.5" stroke="#9a9a9a" stroke-width="0.6"/>
<path d="M973 153 Q979 150 977 145 Q975 141.5 969 142.5" fill="none" stroke="#888" stroke-width="3"/>
<path d="M965 143 L970.5 139 L970.5 146.5 Z" fill="#888"/>
<!-- gray frame (disabled) -->
<path d="M999 134.5 L1016 136.5 L1019 139.5 L1019 154 L1016.5 156 L999 154 Z" fill="#b8b8b8" stroke="#8e8e8e" stroke-width="0.8"/>
<path d="M1002 138.5 L1014 140 L1014 152 L1002 150.5 Z" fill="#d6d6d6" stroke="#999" stroke-width="0.8"/>
<path d="M1005 141.5 L1011.5 142.5 L1011.5 149.5 L1005 148.5 Z" fill="#bbb" stroke="#999" stroke-width="0.6"/>
<!-- cross sections -->
<path d="M1038.5 137.5 L1043 134 L1053 135.2 L1053 153.5 L1048.5 156 L1038.5 155 Z" fill="url(#gB)" stroke="#1a3a6a" stroke-width="0.8"/>
<path d="M1048.5 137.5 L1053 135.2 L1053 153.5 L1048.5 156 Z" fill="#2e5a98"/>
<path d="M1035 142.5 L1049 144.5 L1057 139.5 M1035 150 L1049 152 L1057 147" fill="none" stroke="#e02020" stroke-width="2.6"/>
<rect x="1064" y="128" width="1" height="35" fill="#c9c5bf"/><rect x="1065" y="128" width="1" height="35" fill="#fff"/>
<!-- measure linear -->
<g id="tape">
<path d="M1081 136 L1084.5 134.3 L1096 135.3 L1098 140 L1098 151 L1092.5 152.5 L1081 149.5 Z" fill="#d4d6d2" stroke="#4a4a4a" stroke-width="0.7" stroke-linejoin="round"/>
<path d="M1082.2 137.3 L1091.8 138.5 L1091.8 150.8 L1082.2 148.5 Z" fill="#e8eae6" stroke="#8a8a8a" stroke-width="0.5"/>
<path d="M1092.5 137.6 L1096 135.3 M1092.5 137.6 V152.5" stroke="#4a4a4a" stroke-width="0.6" fill="none"/>
<path d="M1082.5 143 A4.7 4.7 0 0 1 1091.8 143.8 Z" fill="#f2d800" stroke="#333" stroke-width="0.5"/>
<path d="M1082.5 143 A4.7 4.7 0 0 0 1091.8 143.8 Z" fill="#6e6e6e" stroke="#333" stroke-width="0.4"/>
<ellipse cx="1095.2" cy="143.5" rx="1.1" ry="3.2" fill="#e8d000" stroke="#555" stroke-width="0.4"/>
<path d="M1093.5 150.5 L1101.5 152.8 L1100.8 155 L1093 152.5 Z" fill="#f0d800" stroke="#333" stroke-width="0.5"/>
<path d="M1101 152 L1102.8 153.5 L1101.5 156 L1100 155" fill="#555"/>
</g>
<use href="#tape" x="37.3"/>
<path d="M1127 140 Q1130 136 1135 136.5 Q1138.5 137 1139.5 141" fill="none" stroke="#2a5aa8" stroke-width="2.2"/>
<path d="M1137 140.5 L1142 140 L1139.5 144.5 Z" fill="#2a5aa8"/>
<path d="M1119.5 136.5 L1123.5 153.5 L1138.5 145" fill="none" stroke="#e01515" stroke-width="2" stroke-linejoin="miter"/>
<rect x="1152.5" y="130" width="1" height="30" fill="#d4d0ca"/><rect x="1153.5" y="130" width="1" height="30" fill="#fff"/>
<use href="#tape" x="81.3"/>
<path d="M1163.5 145.5 L1173.5 155 M1173.5 145.5 L1163.5 155" stroke="#e01515" stroke-width="2.2" stroke-linecap="round"/>
<use href="#tape" x="118.3"/>
<path d="M1201 154 V136 H1221 V154" fill="none" stroke="#2a6a10" stroke-width="3"/><path d="M1201 154 V136 H1221 V154" fill="none" stroke="#66dd33" stroke-width="1.8"/>
<path d="M1200.5 145.5 L1210.5 135.5 L1220.5 145 L1211 155" fill="none" stroke="#d81010" stroke-width="2.4"/>
<!-- chevrons -->
<path d="M1267 143 L1270 145.5 L1267 148 M1271 143 L1274 145.5 L1271 148" fill="none" stroke="#000" stroke-width="1.6"/>
</svg>


<!-- 3D view -->
<div class="a" style="left:369px;top:164px;width:908px;height:578px;background:linear-gradient(#333366,#a9a9c0);overflow:hidden">
<svg width="908" height="578" class="cs">
<g transform="translate(-369,-164)">
<polygon points="823,180 1059,317 1059,589 823,725 587,589 587,317" fill="#9ffe98"/>
<g stroke="#11cc11" stroke-width="2" fill="none">
<polyline points="587,317 823,180 1059,317 1059,589 823,725 587,589 587,317 823,452.5 1059,317"/>
<line x1="823" y1="452.5" x2="823" y2="725"/>
</g>
<g fill="#22ff22"><rect x="821" y="178.5" width="4" height="3"/><rect x="585" y="315" width="3.5" height="4"/><rect x="1057.5" y="315" width="3.5" height="4"/><rect x="585" y="587" width="3.5" height="4"/><rect x="1057.5" y="587" width="3.5" height="4"/><rect x="821" y="723.5" width="4" height="3"/></g>
<!-- navigation cube -->
<g fill="#dfe4ec">
 <path d="M1185 181 L1203 181 L1194 172 Z"/>
 <path d="M1185 313 L1203 313 L1194 322 Z"/>
 <path d="M1118.6 247 L1128 238.3 L1128 255.5 Z"/>
 <path d="M1269.5 247 L1260 238.3 L1260 255.5 Z"/>
</g>
<g fill="none" stroke="#dfe4ec" stroke-width="5.5">
 <path d="M1172.5 183.5 Q1155 189 1145.5 199"/>
 <path d="M1215.5 183.5 Q1233 189 1242.5 199"/>
</g>
<g fill="#dfe4ec">
 <path d="M1140 204 L1141.5 193 L1151.5 202.5 Z"/>
 <path d="M1248 204 L1246.5 193 L1236.5 202.5 Z"/>
</g>
<path d="M1194 205 Q1200 205 1206 208 L1230 218 Q1237.5 222 1237.5 232 L1237.5 256 Q1237 268 1228 279 L1205 292 Q1194 296 1183 292 L1160 279 Q1151 268 1150.5 256 L1150.5 232 Q1150.5 222 1158 218 L1182 208 Q1188 205 1194 205 Z" fill="#f3f5f9" stroke="#e6eaf0" stroke-width="1"/>
<g fill="#e2e7ee">
 <path d="M1187.5 255 L1200.5 255 L1200 292 L1188 292 Z"/>
 <path d="M1156 227 L1163 219 L1189 238 L1184 249 Z"/>
 <path d="M1232 227 L1225 219 L1199 238 L1204 249 Z"/>
</g>
<circle cx="1194" cy="247.5" r="10" fill="#eef1f6"/>
<g stroke-width="1.2" fill="none">
 <path d="M1194 213.5 V239" stroke="#c8ccd8"/>
 <path d="M1165 263.3 L1188.4 250.3" stroke="#b8f0b0"/>
 <path d="M1199.7 250.3 L1222.9 263.3" stroke="#c8ccd8"/>
</g>
<path d="M1145.9 219.8 L1156.2 268.4" stroke="#1818ff" stroke-width="1.3"/>
<path d="M1156.2 268.4 L1194.5 302.9" stroke="#e01010" stroke-width="1.3"/>
<path d="M1143.5 209.8 H1148 L1143.3 215.5 H1148.3" fill="none" stroke="#1818ff" stroke-width="1.1"/>
<path d="M1197.3 303.5 L1202 310 M1202 303.5 L1197.3 310" fill="none" stroke="#e01010" stroke-width="1.2"/>
<path d="M1220.5 299.5 L1231.5 296.2 L1242.5 299.5 L1242.5 312.5 L1231.5 316 L1220.5 312.5 Z" fill="#d0d0d0"/>
<path d="M1220.5 299.5 L1231.5 296.2 L1242.5 299.5 L1231.5 302.5 Z" fill="#ececec"/>
<path d="M1231.5 302.5 L1242.5 299.5 L1242.5 312.5 L1231.5 316 Z" fill="#e0e0e0"/>
<path d="M1247 301.2 L1261 301.2 L1254 309 Z" fill="#3c3c3c"/>
<!-- axis cross -->
<path d="M1248 713.8 V694" stroke="#1a1a90" stroke-width="1.8"/>
<path d="M1248.5 697.5 V701.5" stroke="#1a1a90" stroke-width="2.6"/>
<path d="M1248.3 713.5 L1259.6 706.6" stroke="#1a8a1a" stroke-width="1.3"/>
<path d="M1254.5 709.5 L1259.6 706.6" stroke="#1a8a1a" stroke-width="2.2"/>
<path d="M1248.3 713.8 L1264.6 723.4" stroke="#901818" stroke-width="1.3"/>
<path d="M1257 718.5 L1263.5 722.5" stroke="#901818" stroke-width="2.4"/>
<g fill="none" stroke="#000" stroke-width="1.1">
 <path d="M1251 688.6 H1256 L1251 694.6 H1256.2"/>
 <path d="M1263.3 700.3 L1265.6 703.6 L1268 700.3 M1265.6 703.6 V707"/>
 <path d="M1268.3 717.3 L1273.2 723.8 M1273.2 717.3 L1268.3 723.8"/>
</g>
</g>
</svg>
</div>

<!-- doc tab bar -->
<div class="a" style="left:512px;top:743px;width:765px;height:1px;background:#a29d95"></div>
<div class="a" style="left:369px;top:742px;width:144px;height:28px;background:linear-gradient(#f4f2ef,#ebe7e2);border-left:1px solid #a7a29b;border-right:1px solid #a7a29b;border-radius:0 0 3px 3px"></div>
<div class="a" style="left:370px;top:767px;width:142px;height:3px;background:linear-gradient(#5e8cbc,#43709e);border-radius:0 0 3px 3px"></div>
<div class="t" style="left:402px;top:750px">Unnamed : 1*</div>
<svg class="a" style="left:380px;top:746px" width="18" height="18" viewBox="0 0 24 24"><use href="#sFC"/></svg>
<svg class="a" style="left:478px;top:746px" width="22" height="20"><path d="M7.6 5 L9 4.2 L17.8 13 Q18.3 15.5 16 15.2 L12 11.5 Z" fill="#111"/><path d="M16.2 4 Q18.8 4.5 17.5 7.3 L10 13.2 L5.6 15.6 L5 15 L11.8 8.2 Z" fill="#111"/></svg>
<div class="gh" style="left:619px;top:771px;width:39px;height:4px"></div>
<div class="a" style="left:369px;top:776px;width:908px;height:1px;background:#cdc9c3"></div>

<!-- Combo view dock -->
<div class="a" style="left:362px;top:165px;width:1px;height:23px;background:#c9c5bf"></div><div class="a" style="left:362px;top:206px;width:1px;height:563px;background:#a7a29b"></div><div class="a" style="left:3px;top:165px;width:1px;height:604px;background:#b7b2ab"></div>
<div class="a" style="left:3px;top:165px;width:359px;height:23px;border-top:1px solid #fff;border-bottom:1px solid #cdc9c3"></div>
<div class="t" style="left:8px;top:170px">Combo View</div>
<svg class="a" style="left:333px;top:170px" width="12" height="12"><use href="#sFloat"/></svg>
<svg class="a" style="left:349px;top:170px" width="12" height="12"><use href="#sClose"/></svg>
<!-- tabs -->
<div class="a" style="left:59px;top:190px;width:54px;height:18px;background:linear-gradient(#f1efec,#d9d5d0);border:1px solid #aaa59e;border-bottom:none;border-radius:4px 4px 0 0"></div>
<div class="t" style="left:70px;top:195px">Tasks</div>
<div class="a" style="left:4px;top:187px;width:56px;height:21px;background:linear-gradient(#ffffff,#ebe7e2);border-right:1px solid #aaa59e;border-radius:3px 3px 0 0"></div>
<div class="a" style="left:4px;top:187px;width:56px;height:3px;background:linear-gradient(#4d7aa8,#6b9ac6);border-radius:3px 3px 0 0"></div>
<div class="t" style="left:15px;top:192px">Model</div>
<div class="a" style="left:60px;top:207px;width:302px;height:1px;background:#aaa59e"></div>
<!-- tree frame -->
<div class="a" style="left:5px;top:208px;width:356px;height:260px;background:#fff;border:1px solid #a7a29b;border-right-color:#b9b4ad"></div>
<div class="a" style="left:6px;top:209px;width:126px;height:21px;background:linear-gradient(#f2f0ed,#e9e6e1);border-bottom:1px solid #aaa59e;border-right:1px solid #cfcbc5"></div>
<div class="a" style="left:132px;top:209px;width:228px;height:21px;background:#efebe7"></div>
<div class="t" style="left:11px;top:214px">Labels &amp; Attributes</div>
<div class="t" style="left:10px;top:231px">Application</div>
<div class="a" style="left:7px;top:260px;width:126px;height:16px;background:#648fbb"></div>
<div class="t" style="left:52px;top:246px;font-weight:bold">Unnamed</div>
<div class="t" style="left:72px;top:262px;color:#fff">Cube</div>
<svg class="a" style="left:8px;top:240px" width="64" height="38">
 <g fill="#a8a8a8"><rect x="9" y="4" width="1" height="1"/><rect x="9" y="6" width="1" height="1"/><rect x="15" y="12" width="1" height="1"/><rect x="17" y="12" width="1" height="1"/></g>
 <rect x="5.5" y="8.5" width="8" height="8" fill="#fff" stroke="#a0a0a0" stroke-width="1"/>
 <rect x="7" y="12" width="5" height="1.2" fill="#111"/>
 <rect x="23.5" y="4.5" width="13" height="15" rx="1.5" fill="#f0f0f0" stroke="#b0aca6" stroke-width="1"/>
 <circle cx="32" cy="9.5" r="3.2" fill="#e01010" stroke="#900" stroke-width="0.4"/>
 <path d="M25.5 11 L29.3 9.5 L33 11 L33 16.5 L29.3 18 L25.5 16.5 Z" fill="#4a7cc0" stroke="#1e467e" stroke-width="0.6"/>
 <path d="M25.5 11 L29.3 9.5 L33 11 L29.3 12.5 Z" fill="#8cb4e4"/>
 <path d="M29.3 12.5 V18" stroke="#1e467e" stroke-width="0.5"/>
</svg>
<svg class="a" style="left:36px;top:260px" width="98" height="16">
 <g fill="#c8b088"><rect x="1" y="1" width="1" height="1"/><rect x="1" y="3" width="1" height="1"/><rect x="1" y="5" width="1" height="1"/><rect x="1" y="7" width="1" height="1"/><rect x="3" y="8" width="1" height="1"/><rect x="5" y="8" width="1" height="1"/><rect x="7" y="8" width="1" height="1"/><rect x="9" y="8" width="1" height="1"/></g>
 <path d="M15.5 4 L19.5 2 L28.5 3 L28.5 12.5 L24 14.5 L15.5 13 Z" fill="#5a8cd0" stroke="#1e3a6a" stroke-width="0.7"/>
 <path d="M15.5 4 L19.5 2 L28.5 3 L24 5 Z" fill="#8cb4e4" stroke="#1e3a6a" stroke-width="0.5"/>
 <path d="M24 5 L28.5 3 L28.5 12.5 L24 14.5 Z" fill="#3a68aa"/>
 <path d="M24 5 V14.5 L15.5 13 M24 14.5 L28.5 12.5" fill="none" stroke="#c02020" stroke-width="1.2"/>
 <g fill="#d02020"><circle cx="24" cy="5" r="1.3"/><circle cx="24" cy="14" r="1.3"/><circle cx="15.5" cy="12.8" r="1.3"/><circle cx="28.5" cy="12.3" r="1.3"/></g>
 <rect x="33.5" y="0.5" width="62" height="15" fill="none" stroke="#c8b088" stroke-width="1" stroke-dasharray="1 1"/>
</svg>

<!-- splitter -->
<div class="gh" style="left:162px;top:469px;width:40px;height:4px"></div>
<!-- property frame -->
<div class="a" style="left:5px;top:474px;width:356px;height:275px;border:1px solid #a7a29b;border-top-color:#9c978f"></div>
<div class="a" style="left:6px;top:475px;width:354px;height:1px;background:#fff"></div>
<div class="a" style="left:7px;top:476px;width:352px;height:271px;background:#fff;border:1px solid #a7a29b"></div>
<div class="a" style="left:8px;top:477px;width:99px;height:21px;background:linear-gradient(#f1eeea,#e8e4df);border-right:1px solid #cfcbc5"></div>
<div class="a" style="left:108px;top:477px;width:248px;height:21px;background:linear-gradient(#f1eeea,#e8e4df);border-right:1px solid #cfcbc5"></div>
<div class="t" style="left:13px;top:482px">Property</div>
<div class="t" style="left:113px;top:482px">Value</div>
<div class="row grp" style="top:498px"><span class="k">Attachment</span></div>
<div class="row alt" style="top:516px"><span class="k">Map Mode</span><span class="v">Deactivated</span></div>
<div class="row grp" style="top:534px"><span class="k">Base</span></div>
<div class="row alt" style="top:552px"><span class="k">Placement</span><span class="v">[(0.00 0.00 1.00); 0.00 °; (0.00 mm&nbsp; 0.00 ...</span></div>
<div class="row wht" style="top:570px"><span class="k">Label</span><span class="v">Cube</span></div>
<div class="row grp" style="top:588px"><span class="k">Box</span></div>
<div class="row wht" style="top:606px"><span class="k">Length</span><span class="v">10.00 mm</span></div>
<div class="row alt" style="top:624px"><span class="k">Width</span><span class="v">10.00 mm</span></div>
<div class="row wht" style="top:642px"><span class="k">Height</span><span class="v">10.00 mm</span></div>
<svg class="a" style="left:0;top:497px" width="360" height="165">
 <g fill="#dad8d4">
  <rect x="29" y="36" width="328" height="1"/>
  <rect x="29" y="72" width="328" height="1"/>
  <rect x="29" y="90" width="328" height="1"/>
  <rect x="29" y="126" width="328" height="1"/>
  <rect x="29" y="144" width="328" height="1"/>
  <rect x="29" y="162" width="328" height="1"/>
  <rect x="108" y="19" width="1" height="17"/>
  <rect x="108" y="55" width="1" height="35"/>
  <rect x="108" y="109" width="1" height="53"/>
 </g>
 <g fill="#9a9894">
  <rect x="19" y="21" width="1" height="1"/><rect x="19" y="23" width="1" height="1"/><rect x="19" y="25" width="1" height="1"/><rect x="19" y="27" width="1" height="1"/><rect x="19" y="29" width="1" height="1"/><rect x="19" y="31" width="1" height="1"/><rect x="19" y="33" width="1" height="1"/>
  <rect x="21" y="27" width="1" height="1"/><rect x="23" y="27" width="1" height="1"/><rect x="25" y="27" width="1" height="1"/><rect x="27" y="27" width="1" height="1"/>
  <rect x="19" y="55" width="1" height="1"/><rect x="19" y="57" width="1" height="1"/>
  <rect x="19" y="69" width="1" height="1"/><rect x="19" y="71" width="1" height="1"/><rect x="19" y="73" width="1" height="1"/><rect x="19" y="75" width="1" height="1"/><rect x="19" y="77" width="1" height="1"/><rect x="19" y="79" width="1" height="1"/><rect x="19" y="81" width="1" height="1"/><rect x="19" y="83" width="1" height="1"/><rect x="19" y="85" width="1" height="1"/><rect x="19" y="87" width="1" height="1"/>
  <rect x="24" y="63" width="1" height="1"/><rect x="26" y="63" width="1" height="1"/><rect x="28" y="63" width="1" height="1"/>
  <rect x="21" y="81" width="1" height="1"/><rect x="23" y="81" width="1" height="1"/><rect x="25" y="81" width="1" height="1"/><rect x="27" y="81" width="1" height="1"/>
  <rect x="19" y="109" width="1" height="1"/><rect x="19" y="111" width="1" height="1"/><rect x="19" y="113" width="1" height="1"/><rect x="19" y="115" width="1" height="1"/><rect x="19" y="117" width="1" height="1"/><rect x="19" y="119" width="1" height="1"/><rect x="19" y="121" width="1" height="1"/><rect x="19" y="123" width="1" height="1"/><rect x="19" y="125" width="1" height="1"/><rect x="19" y="127" width="1" height="1"/><rect x="19" y="129" width="1" height="1"/><rect x="19" y="131" width="1" height="1"/><rect x="19" y="133" width="1" height="1"/><rect x="19" y="135" width="1" height="1"/><rect x="19" y="137" width="1" height="1"/><rect x="19" y="139" width="1" height="1"/><rect x="19" y="141" width="1" height="1"/><rect x="19" y="143" width="1" height="1"/><rect x="19" y="145" width="1" height="1"/><rect x="19" y="147" width="1" height="1"/><rect x="19" y="149" width="1" height="1"/><rect x="19" y="151" width="1" height="1"/><rect x="19" y="153" width="1" height="1"/>
  <rect x="21" y="117" width="1" height="1"/><rect x="23" y="117" width="1" height="1"/><rect x="25" y="117" width="1" height="1"/><rect x="27" y="117" width="1" height="1"/>
  <rect x="21" y="135" width="1" height="1"/><rect x="23" y="135" width="1" height="1"/><rect x="25" y="135" width="1" height="1"/><rect x="27" y="135" width="1" height="1"/>
  <rect x="21" y="153" width="1" height="1"/><rect x="23" y="153" width="1" height="1"/><rect x="25" y="153" width="1" height="1"/><rect x="27" y="153" width="1" height="1"/>
 </g>
 <rect x="15.5" y="59.5" width="8" height="8" fill="#fff" stroke="#9a9894" stroke-width="1"/>
 <path d="M17 63.5 H22 M19.5 61 V66" stroke="#111" stroke-width="1.2"/>
</svg>
<!-- bottom tabs -->
<div class="a" style="left:6px;top:747px;width:50px;height:18px;background:linear-gradient(#d9d5d0,#eeebe7);border:1px solid #aaa59e;border-top:none;border-radius:0 0 4px 4px"></div>
<div class="t" style="left:17px;top:750px">View</div>
<div class="a" style="left:55px;top:746px;width:50px;height:22px;background:linear-gradient(#ebe7e2,#f7f6f4);border-left:1px solid #aaa59e;border-right:1px solid #aaa59e;border-radius:0 0 3px 3px"></div>
<div class="a" style="left:56px;top:765px;width:48px;height:3px;background:linear-gradient(#6b9ac6,#4d7aa8);border-radius:0 0 3px 3px"></div>
<div class="t" style="left:67px;top:751px">Data</div>
<div class="a" style="left:3px;top:768px;width:360px;height:2px;border-bottom:1px solid #a7a29b;border-radius:0 0 4px 4px"></div>

<!-- vertical splitter grip -->
<div class="gv" style="left:364px;top:446px;height:39px;width:4px"></div>

<!-- Report view -->
<div class="a" style="left:3px;top:776px;width:1056px;height:140px;border:1px solid #c9c5bf;border-top-color:#cdc9c3"></div>
<div class="a" style="left:4px;top:777px;width:1054px;height:22px;border-top:1px solid #fff"></div>
<div class="t" style="left:8px;top:782px">Report view</div>
<svg class="a" style="left:1029px;top:782px" width="12" height="12"><use href="#sFloat"/></svg>
<svg class="a" style="left:1045px;top:782px" width="12" height="12"><use href="#sClose"/></svg>
<div class="a" style="left:3px;top:799px;width:1056px;height:117px;background:#fff;border:1px solid #a7a29b;border-top-color:#aaa59e"></div>
<div class="gv" style="left:1060px;top:825px;height:40px;width:4px"></div>

<!-- Python console -->
<div class="a" style="left:1065px;top:776px;width:212px;height:140px;border:1px solid #c9c5bf"></div>
<div class="a" style="left:1066px;top:777px;width:210px;height:22px;border-top:1px solid #fff"></div>
<div class="t" style="left:1070px;top:782px">Python console</div>
<svg class="a" style="left:1246px;top:782px" width="12" height="12"><use href="#sFloat"/></svg>
<svg class="a" style="left:1262px;top:782px" width="12" height="12"><use href="#sClose"/></svg>
<div class="a" style="left:1065px;top:799px;width:212px;height:117px;background:#fff;border:1px solid #a7a29b"></div>
<div class="a" style="left:1071px;top:803px;font-family:'Liberation Mono',monospace;font-size:12px;line-height:15px;color:#444;white-space:pre">Gui.SendMsgToActiveView<span style="color:#bbb">(</span><span style="color:#f22">"</span>
<span style="color:#f22">ViewFit"</span><span style="color:#bbb">)</span>
<span style="color:#bbb">&gt;&gt;&gt;</span>
Gui.activeDocument<span style="color:#bbb">()</span>.acti
veView<span style="color:#bbb">()</span>.viewAxonometric<span style="color:#bbb">(</span>
<span style="color:#bbb">)</span>
<span style="color:#bbb">&gt;&gt;&gt;</span></div>
<!-- scrollbar -->
<div class="a" style="left:1260px;top:801px;width:15px;height:113px;background:#d3cdc4;border:1px solid #a7a29b;border-radius:3px"></div>
<div class="a" style="left:1261px;top:802px;width:13px;height:13px;background:linear-gradient(#fff,#e6e2dc);border-bottom:1px solid #a7a29b;border-radius:3px 3px 0 0"></div>
<div class="a" style="left:1261px;top:870px;width:13px;height:28px;background:linear-gradient(to right,#faf9f7,#e4e0da);border-top:1px solid #a7a29b;border-bottom:1px solid #a7a29b"></div>
<div class="a" style="left:1261px;top:898px;width:13px;height:15px;background:linear-gradient(#fff,#e6e2dc);border-top:1px solid #a7a29b;border-radius:0 0 3px 3px"></div>

<svg class="a" style="left:1260px;top:801px" width="15" height="113">
 <path d="M3.5 9.5 L11.5 9.5 L7.5 5 Z" fill="#000"/>
 <path d="M3.5 103 L11.5 103 L7.5 107.5 Z" fill="#000"/>
 <g fill="#c4c0ba"><rect x="4" y="80" width="7" height="1"/><rect x="4" y="82.5" width="7" height="1"/><rect x="4" y="85" width="7" height="1"/></g>
</svg>
<!-- status bar -->
<div class="a" style="left:1087px;top:926px;width:13px;height:19px;border:2px solid #2a3339;border-radius:6px"></div>
<div class="a" style="left:1093px;top:929px;width:2px;height:5px;background:#2a3339"></div>
<div class="t" style="left:1107px;top:930px">CAD</div>
<div class="a" style="left:1135px;top:934px;width:0;height:0;border-left:3px solid transparent;border-right:3px solid transparent;border-top:3px solid #222"></div>
<div class="t" style="left:1152px;top:930px;letter-spacing:0.18px">27.21 mm x 17.32 mm</div>

<!-- annotation arrows -->
<svg class="a" style="left:0;top:0" width="1280" height="957">
 <rect x="12.5" y="128.5" width="39" height="35.5" fill="none" stroke="#000" stroke-width="4.6"/>
 <polygon points="55,159 97,181.5 87.5,188 119.5,230.5 105.5,241 74.5,199.5 65,206" fill="none" stroke="#000" stroke-width="5" stroke-linejoin="miter"/>
 <polygon points="182.5,667.5 222.5,688.5 213.5,695 242.5,735 226.5,746 198.5,707.5 190,713.5" fill="none" stroke="#000" stroke-width="5" stroke-linejoin="miter"/>
</svg>
</body></html>
